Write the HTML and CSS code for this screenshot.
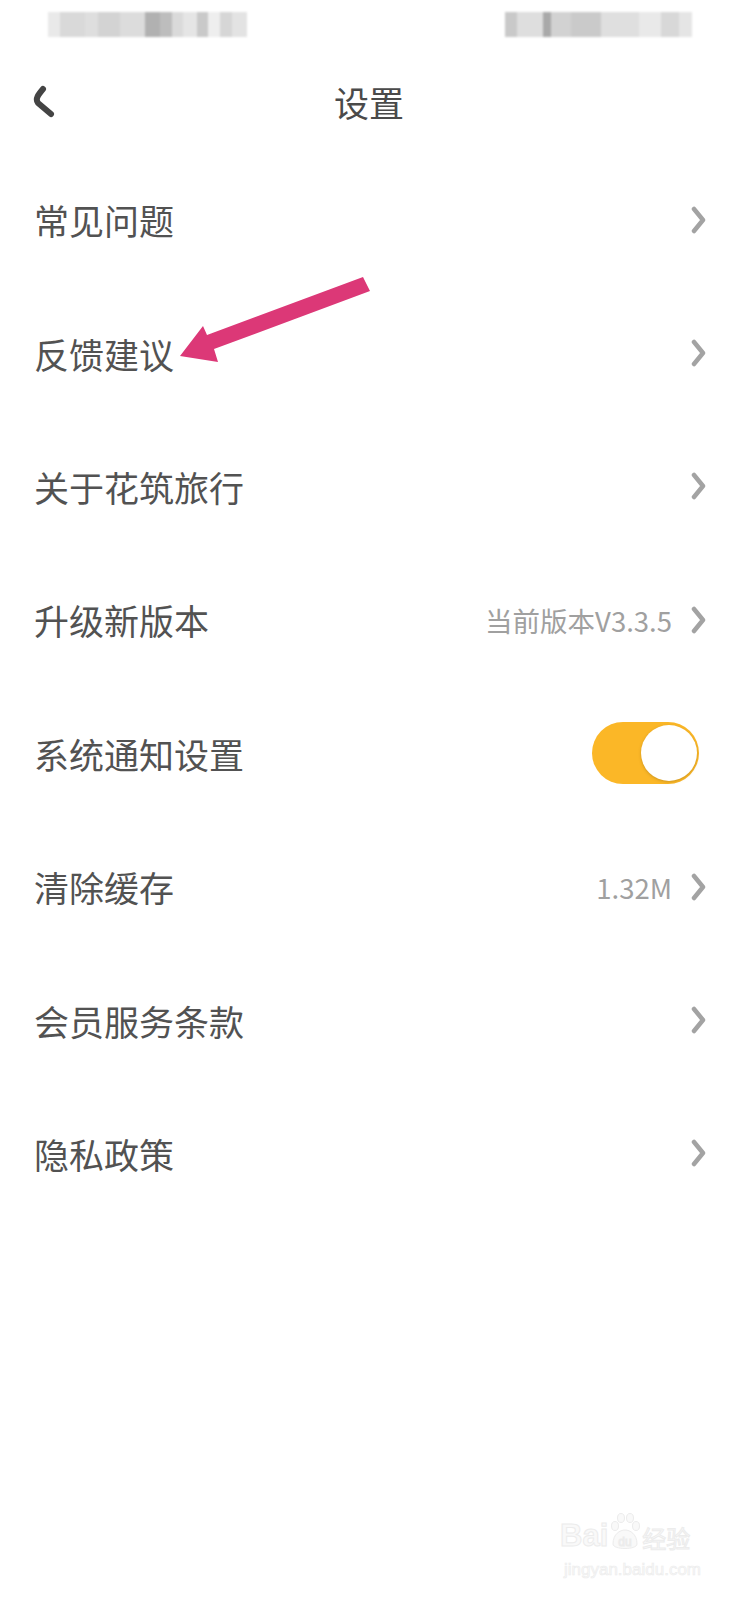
FILE: index.html
```html
<!DOCTYPE html>
<html lang="zh-CN">
<head>
    <meta charset="UTF-8">
    <meta name="viewport" content="width=device-width, initial-scale=1.0">
    <title>设置</title>
    <link rel="stylesheet" href="styles.css">
</head>
<body>
    <div class="screen">
        <div class="status-bar">
            <div class="blur blur-left"></div>
            <div class="blur blur-right"></div>
        </div>

        <header class="nav">
            <a class="back" href="#">
                <svg width="26" height="34" viewBox="0 0 26 34">
                    <path d="M13 5 C8 11 5 15 8 19 L21 30" fill="none" stroke="#444" stroke-width="6" stroke-linecap="round" stroke-linejoin="round"/>
                </svg>
            </a>
            <h1 class="title">设置</h1>
            <span></span>
        </header>

        <ul class="settings">
            <li class="row">
                <span class="label">常见问题</span>
                <svg class="chev" width="16" height="28" viewBox="0 0 16 28"><path d="M4 3 L13 14 L4 25"/></svg>
            </li>
            <li class="row">
                <span class="label">反馈建议</span>
                <svg class="chev" width="16" height="28" viewBox="0 0 16 28"><path d="M4 3 L13 14 L4 25"/></svg>
            </li>
            <li class="row">
                <span class="label">关于花筑旅行</span>
                <svg class="chev" width="16" height="28" viewBox="0 0 16 28"><path d="M4 3 L13 14 L4 25"/></svg>
            </li>
            <li class="row">
                <span class="label">升级新版本</span>
                <span class="value">当前版本V3.3.5</span>
                <svg class="chev" width="16" height="28" viewBox="0 0 16 28"><path d="M4 3 L13 14 L4 25"/></svg>
            </li>
            <li class="row">
                <span class="label">系统通知设置</span>
                <span class="toggle on"><span class="knob"></span></span>
            </li>
            <li class="row">
                <span class="label">清除缓存</span>
                <span class="value">1.32M</span>
                <svg class="chev" width="16" height="28" viewBox="0 0 16 28"><path d="M4 3 L13 14 L4 25"/></svg>
            </li>
            <li class="row">
                <span class="label">会员服务条款</span>
                <svg class="chev" width="16" height="28" viewBox="0 0 16 28"><path d="M4 3 L13 14 L4 25"/></svg>
            </li>
            <li class="row">
                <span class="label">隐私政策</span>
                <svg class="chev" width="16" height="28" viewBox="0 0 16 28"><path d="M4 3 L13 14 L4 25"/></svg>
            </li>
        </ul>

        <!-- annotation arrow pointing at 反馈建议 -->
        <svg class="pointer" width="210" height="100" viewBox="0 0 210 100">
            <polygon points="193,7 200,21 44,79 48,92 10,86 33,56 37,65" fill="#dc3877"/>
        </svg>

        <div class="watermark">
            <div class="wm-top">
                <span class="wm-bai">Bai</span>
                <svg class="wm-paw" width="34" height="42" viewBox="0 0 34 42">
                    <ellipse cx="7" cy="14" rx="3.5" ry="4.5"/>
                    <ellipse cx="13" cy="6" rx="3.5" ry="4.5"/>
                    <ellipse cx="22" cy="6" rx="3.5" ry="4.5"/>
                    <ellipse cx="28" cy="14" rx="3.5" ry="4.5"/>
                    <path d="M5 32 C5 22 12 18 17 18 C22 18 29 22 29 32 C29 38 5 38 5 32 Z"/>
                    <text x="17" y="34" text-anchor="middle">du</text>
                </svg>
                <span class="wm-cn">经验</span>
            </div>
            <div class="wm-url">jingyan.baidu.com</div>
        </div>
    </div>
</body>
</html>
```

FILE: styles.css
```css
body {
    margin: 0;
    background-color: #fff;
    font-family: "Noto Sans CJK SC", "Noto Sans", sans-serif;
}
.screen {
    position: relative;
    width: 738px;
    height: 1600px;
    background-color: #fff;
    overflow: hidden;
}

/* status bar (blurred in the screenshot) */
.status-bar {
    height: 50px;
    padding-top: 12px;
    box-sizing: border-box;
    display: flex;
    justify-content: space-between;
    padding-left: 48px;
    padding-right: 46px;
}
.blur {
    height: 25px;
    filter: blur(1px);
}
.blur-left {
    width: 199px;
    background: linear-gradient(to right,
        #e9e9e9 0 12px, #d9d9d9 12px 37px, #dedede 37px 50px, #d3d3d3 50px 72px,
        #dcdcdc 72px 97px, #b1b1b1 97px 112px, #bdbdbd 112px 124px, #dadada 124px 135px,
        #e5e5e5 135px 149px, #c9c9c9 149px 160px, #eeeeee 160px 172px, #d6d6d6 172px 184px,
        #e3e3e3 184px 199px);
}
.blur-right {
    width: 187px;
    background: linear-gradient(to right,
        #c9c9c9 0 12px, #dedede 12px 38px, #a9a9a9 38px 46px, #d2d2d2 46px 66px,
        #cacaca 66px 96px, #dfdfdf 96px 134px, #e9e9e9 134px 156px, #d8d8d8 156px 174px,
        #e5e5e5 174px 187px);
}

/* navigation bar */
.nav {
    height: 102px;
    display: grid;
    grid-template-columns: 1fr auto 1fr;
    align-items: center;
    padding: 0 30px;
}
.back {
    display: flex;
    align-items: center;
}
.title {
    margin: 0;
    font-size: 35px;
    font-weight: 400;
    color: #4a4a4a;
}

/* settings list */
.settings {
    list-style: none;
    margin: 0;
    padding: 1px 0 0;
}
.row {
    height: 133.4px;
    display: flex;
    align-items: center;
    padding: 0 32px 0 34px;
}
.label {
    flex: 1;
    font-size: 35px;
    color: #525252;
}
.value {
    font-size: 27.5px;
    color: #a0a0a0;
    margin-right: 18px;
}
.chev path {
    fill: none;
    stroke: #a3a3a3;
    stroke-width: 4.5;
    stroke-linecap: round;
    stroke-linejoin: round;
}

/* switch */
.toggle {
    position: relative;
    width: 107px;
    height: 62px;
    border-radius: 31px;
    background-color: #e0e0e0;
    margin-right: 7px;
}
.toggle.on {
    background-color: #fbb727;
}
.knob {
    position: absolute;
    top: 3px;
    right: 2px;
    width: 56px;
    height: 56px;
    border-radius: 50%;
    background-color: #fff;
    box-shadow: 0 1px 3px rgba(120, 90, 20, 0.35);
}

/* red annotation arrow */
.pointer {
    position: absolute;
    left: 170px;
    top: 270px;
}

/* faint watermark */
.watermark {
    position: absolute;
    left: 560px;
    top: 1512px;
    color: #f9f9f9;
    -webkit-text-stroke: 1px #ececec;
    font-family: "Liberation Sans", Arial, sans-serif;
}
.wm-top {
    display: flex;
    align-items: flex-end;
}
.wm-bai {
    font-size: 31px;
    font-weight: bold;
    line-height: 1;
    margin-bottom: 3px;
}
.wm-paw {
    fill: #f9f9f9;
    stroke: #ececec;
    stroke-width: 1;
}
.wm-paw text {
    font-size: 12px;
    font-family: "Liberation Sans", Arial, sans-serif;
}
.wm-cn {
    font-family: "Noto Sans CJK SC", sans-serif;
    font-size: 24px;
    line-height: 1;
    margin-bottom: 4px;
}
.wm-url {
    font-size: 17px;
    margin-top: 6px;
    margin-left: 4px;
    -webkit-text-stroke: 0.6px #ececec;
}
```
